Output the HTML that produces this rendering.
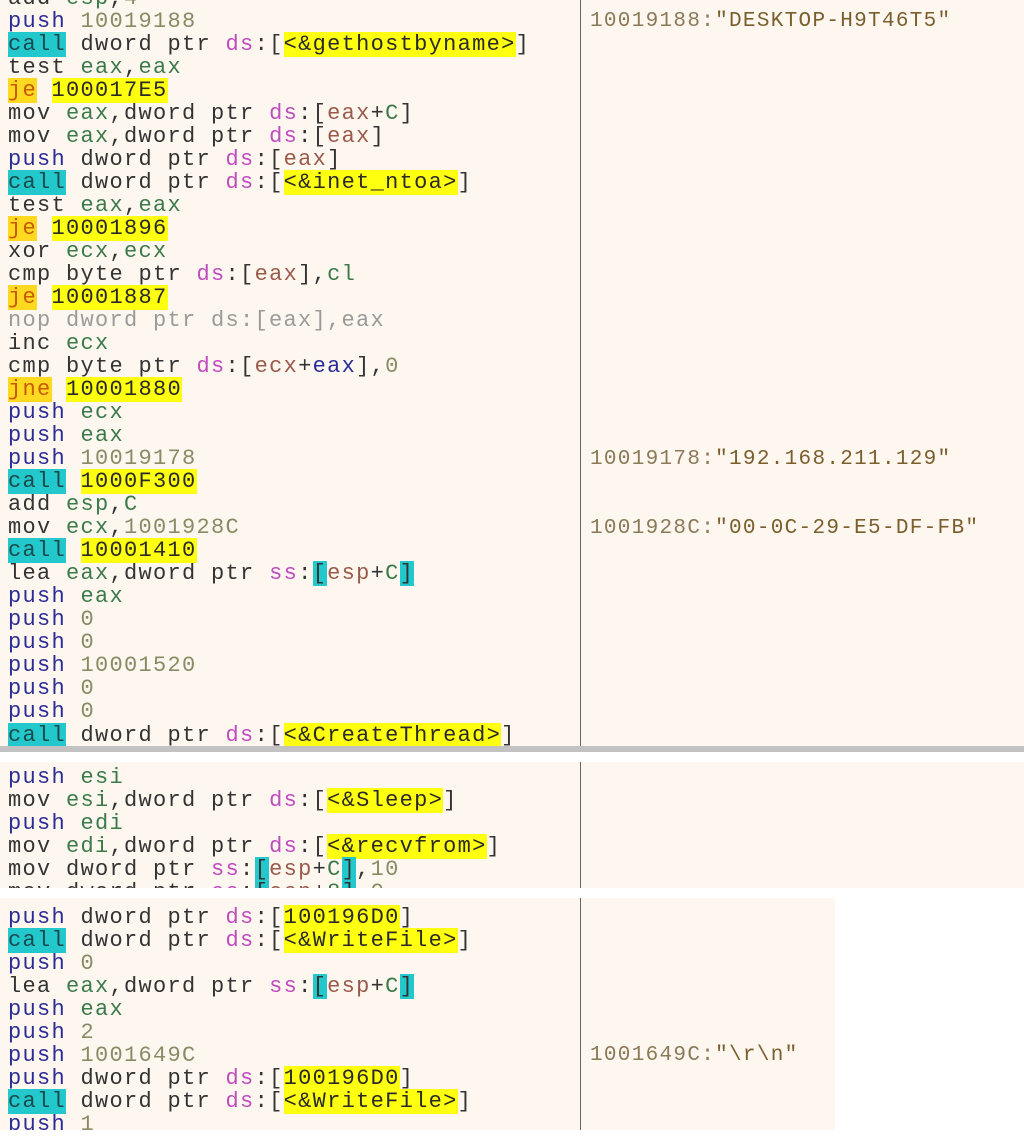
<!DOCTYPE html>
<html><head><meta charset="utf-8"><style>
html,body{margin:0;padding:0;background:#fff;width:1024px;height:1142px;overflow:hidden;position:relative}
.sec{position:absolute;background:#fdf7f0;overflow:hidden}
.l{position:absolute;left:8px;height:23px;line-height:23px;font-family:"Liberation Mono",monospace;font-size:22px;letter-spacing:1.3px;white-space:pre;color:#333;margin-top:2px}
.cm{position:absolute;left:590px;height:23px;line-height:23px;font-family:"Liberation Mono",monospace;font-size:21px;letter-spacing:1.3px;white-space:pre;color:#8a7a58;margin-top:2px}
.cm b{font-weight:normal;color:#7a5e2c}
.p{color:#2c2c96}
.r{color:#3c7a4a}
.s{color:#c04cc0}
.n{color:#8c8a64}
.y{background:#ffff10;color:#2a2a2a}
.c{background:#22c8cc;color:#1a4a4a}
.j{background:#ffd820;color:#c85a00}
.b{color:#9a5a4a}
.cb{background:#22c8cc}
.g{color:#9a9a9a}
.v{position:absolute;left:580px;width:1px;background:#666}
</style></head><body>

<div class="sec" style="left:0;top:0;width:1024px;height:746px">
<div class="l" style="top:-15px">add <span class="r">esp</span>,<span class="n">4</span></div>
<div class="l" style="top:8px"><span class="p">push</span> <span class="n">10019188</span></div>
<div class="l" style="top:31px"><span class="c">call</span> dword ptr <span class="s">ds</span>:[<span class="y">&lt;&amp;gethostbyname&gt;</span>]</div>
<div class="l" style="top:54px">test <span class="r">eax</span>,<span class="r">eax</span></div>
<div class="l" style="top:77px"><span class="j">je</span> <span class="y">100017E5</span></div>
<div class="l" style="top:100px">mov <span class="r">eax</span>,dword ptr <span class="s">ds</span>:[<span class="b">eax</span>+<span class="r">C</span>]</div>
<div class="l" style="top:123px">mov <span class="r">eax</span>,dword ptr <span class="s">ds</span>:[<span class="b">eax</span>]</div>
<div class="l" style="top:146px"><span class="p">push</span> dword ptr <span class="s">ds</span>:[<span class="b">eax</span>]</div>
<div class="l" style="top:169px"><span class="c">call</span> dword ptr <span class="s">ds</span>:[<span class="y">&lt;&amp;inet_ntoa&gt;</span>]</div>
<div class="l" style="top:192px">test <span class="r">eax</span>,<span class="r">eax</span></div>
<div class="l" style="top:215px"><span class="j">je</span> <span class="y">10001896</span></div>
<div class="l" style="top:238px">xor <span class="r">ecx</span>,<span class="r">ecx</span></div>
<div class="l" style="top:261px">cmp byte ptr <span class="s">ds</span>:[<span class="b">eax</span>],<span class="r">cl</span></div>
<div class="l" style="top:284px"><span class="j">je</span> <span class="y">10001887</span></div>
<div class="l g" style="top:307px">nop dword ptr ds:[eax],eax</div>
<div class="l" style="top:330px">inc <span class="r">ecx</span></div>
<div class="l" style="top:353px">cmp byte ptr <span class="s">ds</span>:[<span class="b">ecx</span>+<span class="p">eax</span>],<span class="n">0</span></div>
<div class="l" style="top:376px"><span class="j">jne</span> <span class="y">10001880</span></div>
<div class="l" style="top:399px"><span class="p">push</span> <span class="r">ecx</span></div>
<div class="l" style="top:422px"><span class="p">push</span> <span class="r">eax</span></div>
<div class="l" style="top:445px"><span class="p">push</span> <span class="n">10019178</span></div>
<div class="l" style="top:468px"><span class="c">call</span> <span class="y">1000F300</span></div>
<div class="l" style="top:491px">add <span class="r">esp</span>,<span class="r">C</span></div>
<div class="l" style="top:514px">mov <span class="r">ecx</span>,<span class="n">1001928C</span></div>
<div class="l" style="top:537px"><span class="c">call</span> <span class="y">10001410</span></div>
<div class="l" style="top:560px">lea <span class="r">eax</span>,dword ptr <span class="s">ss</span>:<span class="cb">[</span><span class="b">esp</span>+<span class="r">C</span><span class="cb">]</span></div>
<div class="l" style="top:583px"><span class="p">push</span> <span class="r">eax</span></div>
<div class="l" style="top:606px"><span class="p">push</span> <span class="n">0</span></div>
<div class="l" style="top:629px"><span class="p">push</span> <span class="n">0</span></div>
<div class="l" style="top:652px"><span class="p">push</span> <span class="n">10001520</span></div>
<div class="l" style="top:675px"><span class="p">push</span> <span class="n">0</span></div>
<div class="l" style="top:698px"><span class="p">push</span> <span class="n">0</span></div>
<div class="l" style="top:722px"><span class="c">call</span> dword ptr <span class="s">ds</span>:[<span class="y">&lt;&amp;CreateThread&gt;</span>]</div>
<div class="v" style="top:0;height:746px"></div>
<div class="cm" style="top:8px">10019188:<b>"DESKTOP-H9T46T5"</b></div>
<div class="cm" style="top:446px">10019178:<b>"192.168.211.129"</b></div>
<div class="cm" style="top:515px">1001928C:<b>"00-0C-29-E5-DF-FB"</b></div>
</div>
<div style="position:absolute;left:0;top:746px;width:1024px;height:6px;background:#c2c2c2"></div>

<div class="sec" style="left:0;top:762px;width:1024px;height:126px">
<div class="l" style="top:2px"><span class="p">push</span> <span class="r">esi</span></div>
<div class="l" style="top:25px">mov <span class="r">esi</span>,dword ptr <span class="s">ds</span>:[<span class="y">&lt;&amp;Sleep&gt;</span>]</div>
<div class="l" style="top:48px"><span class="p">push</span> <span class="r">edi</span></div>
<div class="l" style="top:71px">mov <span class="r">edi</span>,dword ptr <span class="s">ds</span>:[<span class="y">&lt;&amp;recvfrom&gt;</span>]</div>
<div class="l" style="top:94px">mov dword ptr <span class="s">ss</span>:<span class="cb">[</span><span class="b">esp</span>+<span class="r">C</span><span class="cb">]</span>,<span class="n">10</span></div>
<div class="l" style="top:117px">mov dword ptr <span class="s">ss</span>:<span class="cb">[</span><span class="b">esp</span>+<span class="r">8</span><span class="cb">]</span>,<span class="n">0</span></div>
<div class="v" style="top:0;height:126px"></div>
</div>

<div class="sec" style="left:0;top:898px;width:835px;height:232px">
<div class="l" style="top:6px"><span class="p">push</span> dword ptr <span class="s">ds</span>:[<span class="y">100196D0</span>]</div>
<div class="l" style="top:29px"><span class="c">call</span> dword ptr <span class="s">ds</span>:[<span class="y">&lt;&amp;WriteFile&gt;</span>]</div>
<div class="l" style="top:52px"><span class="p">push</span> <span class="n">0</span></div>
<div class="l" style="top:75px">lea <span class="r">eax</span>,dword ptr <span class="s">ss</span>:<span class="cb">[</span><span class="b">esp</span>+<span class="r">C</span><span class="cb">]</span></div>
<div class="l" style="top:98px"><span class="p">push</span> <span class="r">eax</span></div>
<div class="l" style="top:121px"><span class="p">push</span> <span class="n">2</span></div>
<div class="l" style="top:144px"><span class="p">push</span> <span class="n">1001649C</span></div>
<div class="l" style="top:167px"><span class="p">push</span> dword ptr <span class="s">ds</span>:[<span class="y">100196D0</span>]</div>
<div class="l" style="top:190px"><span class="c">call</span> dword ptr <span class="s">ds</span>:[<span class="y">&lt;&amp;WriteFile&gt;</span>]</div>
<div class="l" style="top:213px"><span class="p">push</span> <span class="n">1</span></div>
<div class="v" style="top:0;height:232px"></div>
<div class="cm" style="top:144px">1001649C:<b>"\r\n"</b></div>
</div>
</body></html>
